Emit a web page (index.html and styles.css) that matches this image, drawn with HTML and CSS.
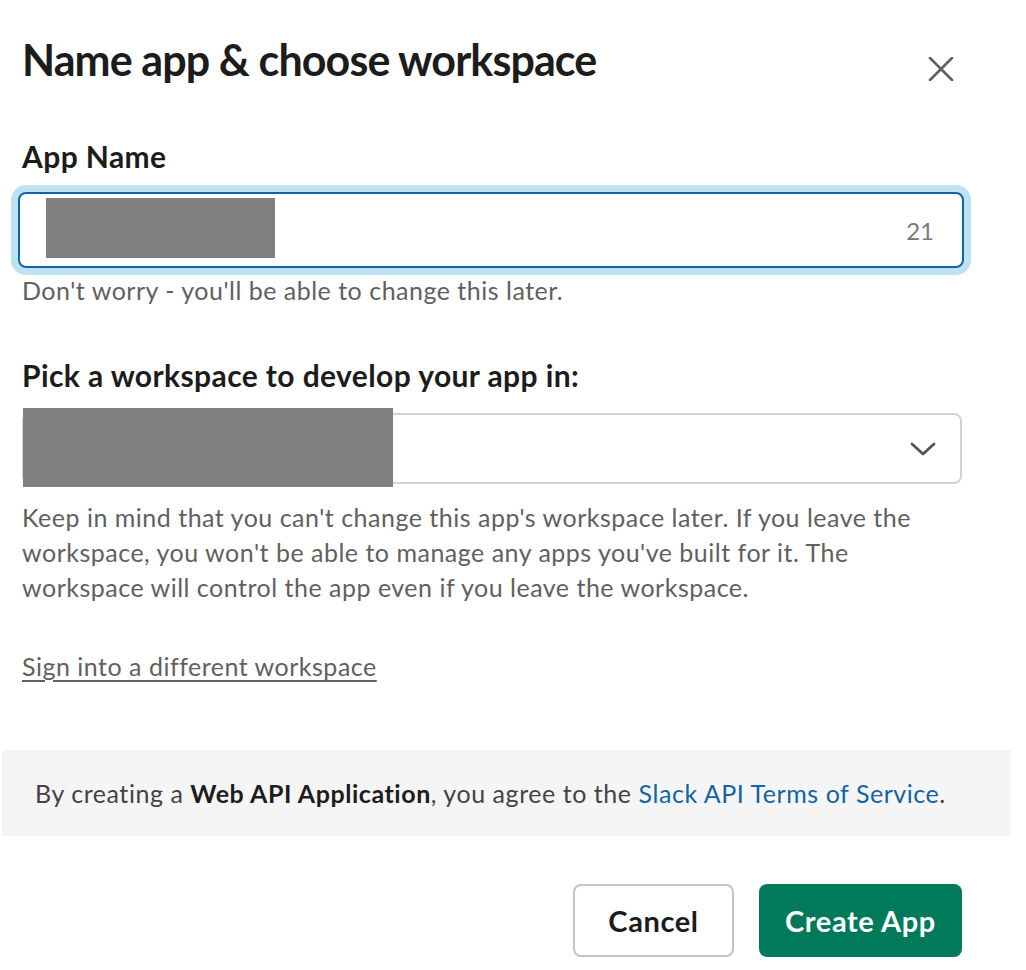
FILE: index.html
```html
<!DOCTYPE html>
<html lang="en">
<head>
<meta charset="utf-8">
<title>Name app &amp; choose workspace</title>
<link rel="stylesheet" href="styles.css">
</head>
<body>
<div class="modal">
  <header class="modal-header">
    <h1 class="title">Name app &amp; choose workspace</h1>
    <button class="close" aria-label="Close">
      <svg width="26" height="24" viewBox="0 0 26 24"><path d="M2 1 L24 23 M24 1 L2 23" stroke="#616061" stroke-width="2.6" stroke-linecap="round" fill="none"/></svg>
    </button>
  </header>
  <div class="body">
    <label class="label first">App Name</label>
    <div class="field-input">
      <span class="redact redact-name"></span>
      <span class="count">21</span>
    </div>
    <p class="hint">Don't worry - you'll be able to change this later.</p>
    <label class="label second">Pick a workspace to develop your app in:</label>
    <div class="select">
      <span class="redact redact-ws"></span>
      <svg class="chevron" width="26" height="14" viewBox="0 0 26 14"><path d="M2 2 L13 12 L24 2" stroke="#555" stroke-width="2.8" stroke-linecap="round" stroke-linejoin="round" fill="none"/></svg>
    </div>
    <p class="hint para">Keep in mind that you can't change this app's workspace later. If you leave the workspace, you won't be able to manage any apps you've built for it. The workspace will control the app even if you leave the workspace.</p>
    <p class="link-row"><a class="link" href="#">Sign into a different workspace</a></p>
  </div>
  <div class="terms">By creating a <strong>Web API Application</strong>, you agree to the <a class="terms-link" href="#">Slack API Terms of Service</a>.</div>
  <div class="actions">
    <button class="btn btn-cancel">Cancel</button>
    <button class="btn btn-primary">Create App</button>
  </div>
</div>
</body>
</html>
```
FILE: styles.css
```css
html, body {
  margin: 0;
  padding: 0;
  background: #fff;
}
body {
  font-family: Lato, "Liberation Sans", sans-serif;
  color: #1d1c1d;
}
.modal {
  width: 1026px;
}
.modal-header {
  display: flex;
  justify-content: space-between;
  align-items: flex-start;
  padding: 34px 72px 0 22px;
}
.title {
  margin: 0;
  font-size: 43px;
  line-height: 52px;
  font-weight: 700;
  letter-spacing: -0.9px;
  color: #1d1c1d;
}
.close {
  margin-top: 23px;
  padding: 0;
  border: none;
  background: none;
  width: 26px;
  height: 24px;
  display: flex;
}
.body {
  padding: 0 64px 0 22px;
}
.label {
  display: block;
  font-size: 30px;
  line-height: 36px;
  font-weight: 700;
  letter-spacing: 0.4px;
  color: #1d1c1d;
}
.label.first {
  margin-top: 52px;
}
.label.second {
  margin-top: 49px;
}
.field-input {
  position: relative;
  box-sizing: border-box;
  height: 76px;
  margin: 18px -2px 0 -4px;
  border: 2px solid #1264a3;
  border-radius: 8px;
  box-shadow: 0 0 0 7px #bde2f2;
  display: flex;
  align-items: center;
  justify-content: flex-end;
  padding-right: 28px;
  background: #fff;
}
.count {
  font-size: 24px;
  color: #7a7a7a;
}
.redact {
  position: absolute;
  background: #808080;
}
.redact-name {
  left: 26px;
  top: 4px;
  width: 229px;
  height: 60px;
}
.hint {
  margin: 5px 0 0;
  font-size: 25px;
  line-height: 35px;
  letter-spacing: 0.5px;
  color: #616061;
}
.select {
  position: relative;
  box-sizing: border-box;
  height: 71px;
  margin-top: 20px;
  border: 2px solid #d3d3d3;
  border-radius: 8px;
  display: flex;
  align-items: center;
  justify-content: flex-end;
  padding-right: 24px;
}
.redact-ws {
  left: -1px;
  top: -7px;
  width: 370px;
  height: 79px;
}
.para {
  margin-top: 16px;
}
.link-row {
  margin: 44px 0 0;
  font-size: 25px;
  line-height: 35px;
  letter-spacing: 0.5px;
}
.link {
  color: #616061;
  text-decoration: underline;
  text-underline-offset: 4px;
}
.terms {
  margin: 66px 15px 0 2px;
  background: #f5f5f5;
  padding: 25px 33px;
  font-size: 25px;
  line-height: 36px;
  letter-spacing: 0.55px;
  color: #454245;
}
.terms strong {
  color: #1d1c1d;
  font-weight: 700;
}
.terms-link {
  color: #1264a3;
  text-decoration: none;
}
.actions {
  display: flex;
  justify-content: flex-end;
  gap: 25px;
  padding: 48px 64px 0 0;
}
.btn {
  font-family: Lato, "Liberation Sans", sans-serif;
  font-size: 29px;
  font-weight: 700;
  letter-spacing: 0.6px;
  height: 73px;
  border-radius: 8px;
  cursor: pointer;
}
.btn-cancel {
  width: 161px;
  background: #fff;
  color: #1d1c1d;
  border: 2px solid #c4c4c4;
}
.btn-primary {
  width: 203px;
  background: #007a5a;
  color: #fff;
  border: none;
}
```
